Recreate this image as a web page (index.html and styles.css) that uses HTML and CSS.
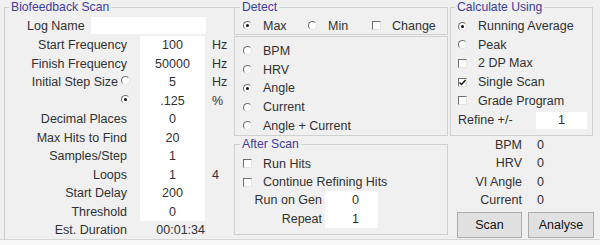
FILE: index.html
```html
<!DOCTYPE html>
<html lang="en">

<head>
    <meta charset="UTF-8">
    <title>Biofeedback Scan</title>
    <link rel="stylesheet" href="styles.css">
</head>

<body>
    <div class="window">
        <!-- scan settings -->
        <fieldset class="group scan">
            <legend>Biofeedback Scan</legend>
            <div class="log-row">
                <span>Log Name</span>
                <span class="field log-field"></span>
            </div>
            <div class="scan-grid">
                <span class="lbl">Start Frequency</span><span class="val">100</span><span class="unit">Hz</span>
                <span class="lbl">Finish Frequency</span><span class="val">50000</span><span class="unit">Hz</span>
                <span class="lbl lbl-radio">Initial Step Size<i class="radio up"></i></span><span class="val">5</span><span class="unit">Hz</span>
                <span class="lbl lbl-radio"><i class="radio on up"></i></span><span class="val">.125</span><span class="unit">%</span>
                <span class="lbl">Decimal Places</span><span class="val">0</span><span class="unit"></span>
                <span class="lbl">Max Hits to Find</span><span class="val">20</span><span class="unit"></span>
                <span class="lbl">Samples/Step</span><span class="val">1</span><span class="unit"></span>
                <span class="lbl">Loops</span><span class="val">1</span><span class="unit">4</span>
                <span class="lbl">Start Delay</span><span class="val">200</span><span class="unit"></span>
                <span class="lbl">Threshold</span><span class="val">0</span><span class="unit"></span>
                <span class="lbl">Est. Duration</span><span class="val plain">00:01:34</span><span class="unit"></span>
            </div>
        </fieldset>

        <div class="middle">
            <fieldset class="group detect">
                <legend>Detect</legend>
                <div class="detect-row">
                    <span class="opt"><i class="radio on"></i>Max</span>
                    <span class="opt"><i class="radio"></i>Min</span>
                    <span class="opt"><i class="check"></i>Change</span>
                </div>
            </fieldset>
            <div class="targets">
                <span class="opt"><i class="radio"></i>BPM</span>
                <span class="opt"><i class="radio"></i>HRV</span>
                <span class="opt"><i class="radio on"></i>Angle</span>
                <span class="opt"><i class="radio"></i>Current</span>
                <span class="opt"><i class="radio"></i>Angle + Current</span>
            </div>
            <fieldset class="group after">
                <legend>After Scan</legend>
                <div class="after-list">
                    <span class="opt"><i class="check"></i>Run Hits</span>
                    <span class="opt"><i class="check"></i>Continue Refining Hits</span>
                </div>
                <div class="gen-grid">
                    <span class="lbl">Run on Gen</span><span class="val">0</span>
                    <span class="lbl">Repeat</span><span class="val">1</span>
                </div>
            </fieldset>
        </div>

        <div class="right">
            <fieldset class="group calc">
                <legend>Calculate Using</legend>
                <div class="calc-list">
                    <span class="opt"><i class="radio on"></i>Running Average</span>
                    <span class="opt"><i class="radio"></i>Peak</span>
                    <span class="opt"><i class="check"></i>2 DP Max</span>
                    <span class="opt"><i class="check">
                        <svg width="7" height="7" viewBox="0 0 7 7"><polyline points="0.5,3.5 2.5,5.5 6.5,1" fill="none" stroke="#111" stroke-width="1.4"/></svg>
                    </i>Single Scan</span>
                    <span class="opt"><i class="check"></i>Grade Program</span>
                    <span class="refine">Refine +/-<span class="field refine-field">1</span></span>
                </div>
            </fieldset>
            <div class="readouts">
                <span class="lbl">BPM</span><span>0</span>
                <span class="lbl">HRV</span><span>0</span>
                <span class="lbl">VI Angle</span><span>0</span>
                <span class="lbl">Current</span><span>0</span>
            </div>
            <div class="buttons">
                <button type="button" class="btn btn-scan">Scan</button>
                <button type="button" class="btn btn-analyse">Analyse</button>
            </div>
        </div>
    </div>
</body>
</html>
```

FILE: styles.css
```css
/* general */
* {
    box-sizing: border-box;
}

body {
    margin: 0;
    background-color: #f8f8f8;
    font-family: "Liberation Sans", Arial, sans-serif;
    font-size: 12.5px;
    color: #303030;
}

.window {
    display: grid;
    grid-template-columns: 230px 216px 144px;
    align-items: start;
    width: 600px;
    height: 240px;
    padding-left: 4px;
    background-color: #f0f0f0;
    border-bottom: 1px solid #d6d6d6;
}

.group {
    margin: 0;
    padding: 0;
    min-width: 0;
    border: 1px solid #d0d0d0;
}

.group legend {
    margin-left: 4px;
    padding: 0 2px;
    font-size: 12.2px;
    line-height: 15px;
    color: #3f3c9c;
}

.field,
.val {
    background-color: #fff;
}

/* radio / check boxes */
.radio,
.check {
    display: inline-flex;
    align-items: center;
    justify-content: center;
    flex: none;
    width: 9px;
    height: 9px;
    background-color: #fff;
    border: 1px solid;
    border-color: #6e6e6e #e4e4e4 #e4e4e4 #6e6e6e;
}

.radio {
    border-radius: 50%;
}

.radio.on::after {
    content: "";
    width: 3px;
    height: 3px;
    border-radius: 50%;
    background-color: #111;
}

.radio.up {
    margin-bottom: 3px;
}

.opt {
    display: flex;
    align-items: center;
    gap: 11px;
    white-space: nowrap;
}

/* biofeedback scan */
.scan {
    align-self: stretch;
    border-right: none;
    border-bottom: none;
}

.log-row {
    display: flex;
    align-items: center;
    gap: 6px;
    height: 17px;
    margin-top: 2px;
    padding-left: 22px;
}

.log-field {
    width: 115px;
    height: 17px;
}

.scan-grid {
    display: grid;
    grid-template-columns: 135px 65px auto;
    grid-auto-rows: 18.5px;
    line-height: 18.5px;
    margin-top: 2px;
}

.scan-grid .lbl {
    text-align: right;
    padding-right: 13px;
    white-space: nowrap;
}

.scan-grid .lbl-radio {
    display: flex;
    align-items: center;
    justify-content: flex-end;
    gap: 3px;
    padding-right: 10px;
}

.scan-grid .val {
    text-align: center;
}

.scan-grid .val.plain {
    background: none;
    text-align: right;
}

.unit {
    padding-left: 7px;
}

/* detect */
.middle {
    display: flex;
    flex-direction: column;
    width: 214px;
}

.detect legend {
    margin-left: 5px;
}

.detect-row {
    display: grid;
    grid-template-columns: 65px 64px auto;
    align-items: center;
    height: 17px;
    margin-top: 2px;
    padding-left: 8px;
}

.targets {
    display: grid;
    grid-auto-rows: 18.75px;
    margin-top: 1px;
    padding: 4.5px 0 0 8px;
    border: 1px solid #d0d0d0;
}

/* after scan */
.after {
    margin-top: 1px;
    padding-bottom: 6px;
}

.after legend {
    margin-left: 5px;
}

.after-list {
    display: grid;
    grid-auto-rows: 18.5px;
    margin-top: 2px;
    padding-left: 8px;
}

.gen-grid {
    display: grid;
    grid-template-columns: 87px 53px;
    column-gap: 3px;
    grid-auto-rows: 18.5px;
    line-height: 18.5px;
}

.gen-grid .lbl {
    text-align: right;
}

.gen-grid .val {
    text-align: center;
    padding-left: 8px;
}

/* calculate using */
.right {
    display: flex;
    flex-direction: column;
}

.calc {
    width: 143px;
    padding-bottom: 6px;
}

.calc-list {
    display: grid;
    grid-auto-rows: 18.6px;
    margin-top: 2px;
    padding: 0 5px 0 7px;
}

.refine {
    display: flex;
    align-items: flex-end;
    justify-content: space-between;
    line-height: 17px;
}

.refine-field {
    width: 51px;
    height: 17px;
    text-align: center;
}

.readouts {
    display: grid;
    grid-template-columns: 72px auto;
    column-gap: 15px;
    grid-auto-rows: 18.6px;
    line-height: 18.6px;
}

.readouts .lbl {
    text-align: right;
}

.buttons {
    display: flex;
    gap: 6px;
    margin-top: 2px;
    padding-left: 7px;
}

.btn {
    height: 26px;
    padding: 0;
    font-family: inherit;
    font-size: 12.5px;
    color: #111;
    background-color: #e1e1e1;
    border: 1px solid #adadad;
}

.btn-scan {
    width: 65px;
}

.btn-analyse {
    width: 66px;
}
```
